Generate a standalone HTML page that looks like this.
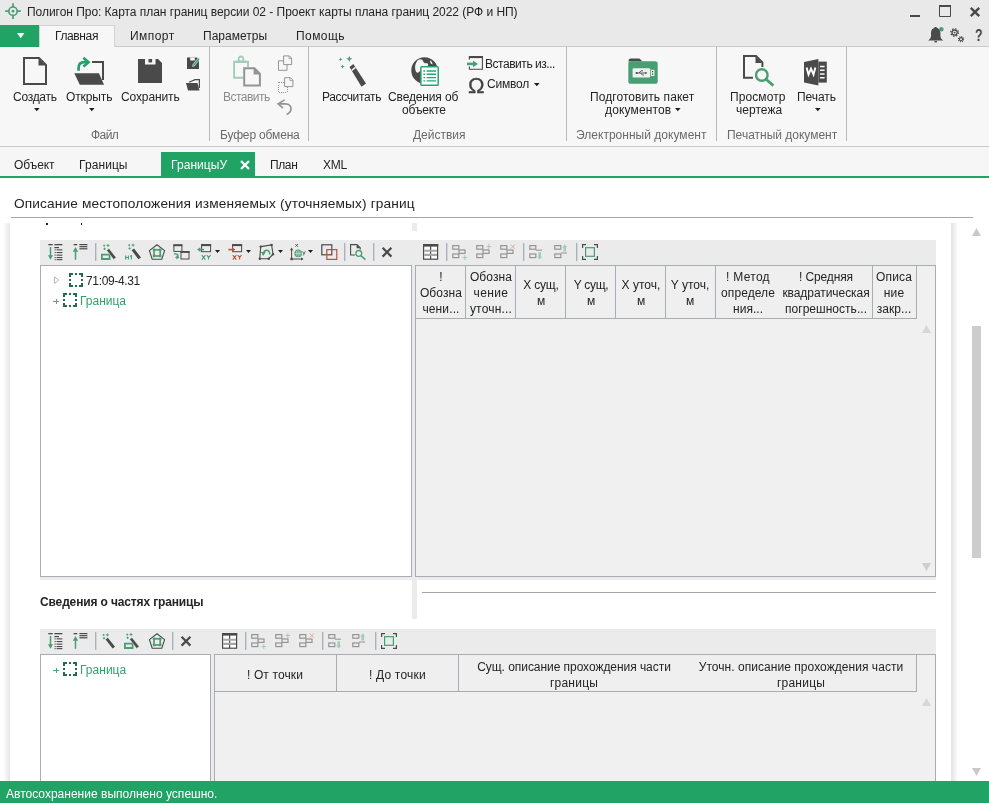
<!DOCTYPE html>
<html lang="ru"><head><meta charset="utf-8"><title>Полигон Про</title>
<style>
html,body{margin:0;padding:0;}
body{width:989px;height:803px;position:relative;overflow:hidden;background:#fff;font-family:"Liberation Sans",sans-serif;}
.a{position:absolute;box-sizing:border-box;}
.t{position:absolute;white-space:nowrap;line-height:1;will-change:transform;}
svg{position:absolute;overflow:visible;}
</style></head>
<body>
<div class="a" style="left:0px;top:0px;width:989px;height:46px;background:#e9e9e9;"></div>
<div class="a" style="left:0px;top:46px;width:989px;height:101px;background:#f7f7f7;border-top:1px solid #cbcbcb;border-bottom:1px solid #c9c9c9;"></div>
<div class="a" style="left:0px;top:25px;width:39px;height:22px;background:#21a366;"></div>
<div class="a" style="left:39px;top:25px;width:76px;height:22px;background:#f7f7f7;border:1px solid #d2d2d2;border-bottom:none;"></div>
<div class="a" style="left:209px;top:47px;width:1px;height:94px;background:#b9b9b9;"></div>
<div class="a" style="left:308px;top:47px;width:1px;height:94px;background:#b9b9b9;"></div>
<div class="a" style="left:566px;top:47px;width:1px;height:94px;background:#b9b9b9;"></div>
<div class="a" style="left:716px;top:47px;width:1px;height:94px;background:#b9b9b9;"></div>
<div class="a" style="left:846px;top:47px;width:1px;height:94px;background:#b9b9b9;"></div>
<div class="a" style="left:0px;top:147px;width:989px;height:29px;background:#f6f6f6;"></div>
<div class="a" style="left:0px;top:176px;width:989px;height:2px;background:#21a366;"></div>
<div class="a" style="left:161px;top:152px;width:94px;height:26px;background:#21a366;"></div>
<div class="a" style="left:11px;top:217px;width:962px;height:1px;background:#a3a5ad;"></div>
<div class="a" style="left:3px;top:223px;width:7px;height:559px;background:linear-gradient(to right,rgba(255,255,255,0),#e6e6e6);"></div>
<div class="a" style="left:951px;top:223px;width:7px;height:559px;background:linear-gradient(to right,#e2e2e2,rgba(255,255,255,0));"></div>
<div class="a" style="left:46px;top:223px;width:1.6px;height:1.6px;background:#222;"></div>
<div class="a" style="left:80.5px;top:223px;width:1.6px;height:1.6px;background:#222;"></div>
<div class="a" style="left:412px;top:223px;width:5px;height:8px;background:#ebebeb;"></div>
<div class="a" style="left:412px;top:240px;width:5px;height:379px;background:#ebebeb;"></div>
<div class="a" style="left:40px;top:240px;width:896px;height:25px;background:#ebebeb;"></div>
<div class="a" style="left:40px;top:577px;width:896px;height:3px;background:#ebebeb;"></div>
<div class="a" style="left:40px;top:265px;width:372px;height:312px;background:#fff;border:1px solid #a9abb5;"></div>
<div class="a" style="left:415px;top:265px;width:521px;height:312px;background:#f0f0f0;border:1px solid #a9abb5;"></div>
<div class="a" style="left:415px;top:265px;width:51px;height:54px;border:1px solid #a9abb5;background:#efefef;"></div>
<div class="a" style="left:465px;top:265px;width:51px;height:54px;border:1px solid #a9abb5;background:#efefef;"></div>
<div class="a" style="left:515px;top:265px;width:51px;height:54px;border:1px solid #a9abb5;background:#efefef;"></div>
<div class="a" style="left:565px;top:265px;width:51px;height:54px;border:1px solid #a9abb5;background:#efefef;"></div>
<div class="a" style="left:615px;top:265px;width:51px;height:54px;border:1px solid #a9abb5;background:#efefef;"></div>
<div class="a" style="left:665px;top:265px;width:51px;height:54px;border:1px solid #a9abb5;background:#efefef;"></div>
<div class="a" style="left:715px;top:265px;width:158px;height:54px;border:1px solid #a9abb5;background:#efefef;"></div>
<div class="a" style="left:872px;top:265px;width:45px;height:54px;border:1px solid #a9abb5;background:#efefef;"></div>
<div class="a" style="left:422px;top:592px;width:514px;height:1px;background:#a2a2a2;"></div>
<div class="a" style="left:40px;top:629px;width:896px;height:25px;background:#ebebeb;"></div>
<div class="a" style="left:211px;top:654px;width:3px;height:128px;background:#ebebeb;"></div>
<div class="a" style="left:40px;top:654px;width:171px;height:140px;background:#fff;border:1px solid #a9abb5;"></div>
<div class="a" style="left:214px;top:654px;width:722px;height:140px;background:#f0f0f0;border:1px solid #a9abb5;"></div>
<div class="a" style="left:214px;top:654px;width:123px;height:38px;border:1px solid #a9abb5;background:#efefef;"></div>
<div class="a" style="left:336px;top:654px;width:123px;height:38px;border:1px solid #a9abb5;background:#efefef;"></div>
<div class="a" style="left:458px;top:654px;width:459px;height:38px;border:1px solid #a9abb5;background:#efefef;"></div>
<div class="a" style="left:972px;top:326px;width:9px;height:232px;background:#cdcdcd;"></div>
<div class="a" style="left:0px;top:781px;width:989px;height:22px;background:#21a366;"></div>
<svg style="left:5px;top:3px" width="16" height="16" viewBox="0 0 16 16"><circle cx="8" cy="8.2" r="4.2" fill="none" stroke="#4a9e74" stroke-width="1.7"/><circle cx="8" cy="8.2" r="1.4" fill="#4a9e74"/><path d="M8,0.3 V4 M8,12.4 V16 M0.2,8.2 H3.8 M12.2,8.2 H15.8" stroke="#4a9e74" stroke-width="1.7" fill="none"/></svg>
<svg style="left:910px;top:15px" width="10" height="2" viewBox="0 0 10 2"><rect width="10" height="2" fill="#4a4a4a"/></svg><svg style="left:939px;top:5px" width="12" height="12" viewBox="0 0 12 12"><path d="M0.5,1 H11.5 V11.5 H0.5 Z" fill="none" stroke="#4a4a4a" stroke-width="1"/><rect x="0" y="0" width="12" height="2" fill="#4a4a4a"/></svg><svg style="left:970px;top:7px" width="10" height="10" viewBox="0 0 10 10"><path d="M0.8,0.8 L9.2,9.2 M9.2,0.8 L0.8,9.2" stroke="#4a4a4a" stroke-width="2.4" fill="none"/></svg><svg style="left:928.4px;top:27px" width="16" height="16" viewBox="0 0 16 16"><path d="M7.7,0.8 C4.6,0.8 3,3.2 3,6 V9 C3,11 1.8,12 0.2,13.4 H15.2 C13.6,12 12.4,11 12.4,9 V6 C12.4,3.2 10.8,0.8 7.7,0.8 Z" fill="#4a4a4a"/><rect x="6.6" y="0" width="2" height="1.6" fill="#4a4a4a"/><rect x="6.4" y="14" width="2.6" height="1.4" fill="#4a4a4a"/><circle cx="13.4" cy="2.2" r="2.2" fill="#4a9e74"/></svg><svg style="left:949px;top:27px" width="16" height="16" viewBox="0 0 16 16"><circle cx="5.6" cy="5.6" r="2.6" fill="none" stroke="#4a4a4a" stroke-width="1.3"/><circle cx="5.6" cy="5.6" r="3.7700000000000005" fill="none" stroke="#4a4a4a" stroke-width="1.3" stroke-dasharray="1.480"/><circle cx="5.6" cy="5.6" r="0.9" fill="#4a4a4a"/><circle cx="12" cy="12.2" r="1.6" fill="none" stroke="#4a4a4a" stroke-width="1.1"/><circle cx="12" cy="12.2" r="2.5900000000000003" fill="none" stroke="#4a4a4a" stroke-width="1.1" stroke-dasharray="1.017"/></svg>
<svg style="left:17px;top:33px" width="7.4" height="5.2" viewBox="0 0 7.4 5.2"><path d="M0,0 H7.4 L3.7,5.2 Z" fill="#fff"/></svg>
<svg style="left:23px;top:57px" width="24" height="28" viewBox="0 0 24 28"><path d="M1,1 H16 L23,8 V27 H1 Z" fill="none" stroke="#4a4a4a" stroke-width="2"/><path d="M15.5,1.5 V8.5 H22.5 Z" fill="#4a4a4a"/></svg><svg style="left:74px;top:57px" width="30" height="28" viewBox="0 0 30 28"><path d="M18,5 H29 V23" fill="none" stroke="#4a4a4a" stroke-width="2"/><path d="M0.3,16.3 H25 L30,27.8 H5.8 Z" fill="#4a4a4a"/><path d="M4.6,13.8 V10.5 C4.6,7 7,5.2 10.5,5.2 H14" fill="none" stroke="#21a366" stroke-width="2.7"/><path d="M9.4,0.8 L14.6,5.2 L9.4,9.6" fill="none" stroke="#21a366" stroke-width="2.6"/></svg><svg style="left:138px;top:59px" width="24" height="24" viewBox="0 0 24 24"><path d="M0,0 H20 L24,4 V24 H0 Z" fill="#4a4a4a"/><rect x="7" y="0" width="10.5" height="5.5" fill="#f7f7f7"/><rect x="10.5" y="0" width="3.6" height="3.4" fill="#4a4a4a"/></svg><svg style="left:187px;top:57px" width="13" height="12" viewBox="0 0 13 12"><path d="M0,0.5 H10 L12,2.5 V12 H0 Z" fill="#4a4a4a"/><rect x="3.2" y="0.5" width="4.6" height="3" fill="#f7f7f7"/><path d="M6,7.5 L11.2,0.8 L12.8,2.2 L7.6,8.8 L5.6,9.4 Z" fill="#4a9e74" stroke="#f7f7f7" stroke-width="0.6"/></svg><svg style="left:186px;top:79px" width="14" height="12" viewBox="0 0 14 12"><path d="M3,3.2 L9,0.6 H13.4 V9" fill="none" stroke="#4a4a4a" stroke-width="1.2"/><path d="M0,4 H11.5 L13.5,11.5 H2 Z" fill="#4a4a4a"/></svg><svg style="left:233px;top:55px" width="28" height="32" viewBox="0 0 28 32"><path d="M4,6.8 H1.1 V22.8 H10" fill="none" stroke="#a3cdb6" stroke-width="1.9"/><path d="M12,6.8 H15 V12" fill="none" stroke="#a3cdb6" stroke-width="1.9"/><path d="M2.6,8 V5.8 H4.7 C4.3,2.4 6,0.6 8,0.6 C10,0.6 11.7,2.4 11.3,5.8 H13.4 V8 Z" fill="#a3cdb6"/><circle cx="8" cy="4" r="1.6" fill="#f7f7f7"/><path d="M11.2,13.2 H21.4 L26.9,18.7 V30.6 H11.2 Z" fill="#f7f7f7" stroke="#949494" stroke-width="2"/><path d="M20.6,12.6 V19.4 H27.6 Z" fill="#949494"/></svg><svg style="left:278px;top:55px" width="15" height="16" viewBox="0 0 15 16"><path d="M0.5,5.8 H9 V15.3 H0.5 Z" fill="none" stroke="#949494" stroke-width="1"/><path d="M5.6,0.9 H11.4 L13.6,3.1 V9.6 H5.6 Z" fill="#f7f7f7" stroke="#949494" stroke-width="1"/><path d="M11,1 V3.6 H13.6" fill="none" stroke="#949494" stroke-width="0.8"/></svg><svg style="left:278px;top:77px" width="16" height="16.5" viewBox="0 0 16 16.5"><path d="M0.5,5.5 H9 V15.5 H0.5 Z" fill="none" stroke="#949494" stroke-width="1" stroke-dasharray="1 1.12" shape-rendering="crispEdges"/><path d="M6.6,0.7 H12.4 L14.9,3.2 V9.6 H6.6 Z" fill="#f7f7f7" stroke="#949494" stroke-width="1"/><path d="M12,0.8 V3.6 H14.8" fill="none" stroke="#949494" stroke-width="0.8"/></svg><svg style="left:277px;top:99px" width="16" height="16.5" viewBox="0 0 16 16.5"><path d="M1.4,4.9 H8.6 C12,4.9 14,7 14,9.6 C14,12.4 12.2,14.4 9.6,15.4" fill="none" stroke="#949494" stroke-width="1.7"/><path d="M7.6,0.9 L1.2,4.9 L6,9.2" fill="none" stroke="#949494" stroke-width="1.7"/></svg><svg style="left:337.8px;top:55.7px" width="28" height="31" viewBox="0 0 28 31"><path d="M2.6,1.5 L3.132,2.868 L4.5,3.4 L3.132,3.932 L2.6,5.3 L2.068,3.932 L0.7000000000000002,3.4 L2.068,2.868 Z" fill="#4a9e74"/><path d="M11.3,-0.30000000000000027 L12.168000000000001,1.9319999999999997 L14.4,2.8 L12.168000000000001,3.668 L11.3,5.9 L10.432,3.668 L8.200000000000001,2.8 L10.432,1.9319999999999997 Z" fill="#4a9e74"/><path d="M4.6,8.399999999999999 L5.215999999999999,9.984 L6.8,10.6 L5.215999999999999,11.216 L4.6,12.8 L3.9839999999999995,11.216 L2.3999999999999995,10.6 L3.9839999999999995,9.984 Z" fill="#4a9e74"/><path d="M11.5,11 L15.3,8 L28,27.5 L23.5,30.8 Z" fill="#4a4a4a"/><path d="M13.3,13.8 L17.1,10.8 L17.9,12 L14.1,15 Z" fill="#f7f7f7"/></svg><svg style="left:411px;top:57px" width="28" height="29" viewBox="0 0 28 29"><circle cx="13.5" cy="13.4" r="13.2" fill="#4a4a4a"/><path d="M7,3 C9.5,1.6 11.4,2.2 12.2,4.4 C12.8,6 14.4,6.4 16.4,6.2 C18,7.4 17,9.4 15,10.4 L10,12.4 C8.4,14.6 7.4,16.6 5.4,15.2 C3.4,12.4 3.6,6.4 7,3 Z" fill="#f7f7f7"/><path d="M19.4,3.2 C20.6,4.4 21.4,5.6 21.6,7.4 L19.8,6.6 C19.2,5.4 19,4.4 19.4,3.2 Z" fill="#f7f7f7"/><rect x="9.9" y="9.8" width="17.3" height="18.4" rx="0.8" fill="#fff" stroke="#2aa374" stroke-width="1.5"/><path d="M12.4,14 h1.7 M15.6,14 h9.4 M12.4,17.3 h1.7 M15.6,17.3 h9.4 M12.4,20.6 h1.7 M15.6,20.6 h9.4 M12.4,23.9 h1.7 M15.6,23.9 h9.4" stroke="#2aa374" stroke-width="1.4"/></svg><svg style="left:467px;top:56px" width="16" height="14" viewBox="0 0 16 14"><path d="M2.4,1 V3.6 M2.4,10.6 V13.3 H15.4 V1" fill="none" stroke="#4a4a4a" stroke-width="1.1"/><rect x="1.9" y="0" width="14.1" height="2.1" fill="#4a4a4a"/><path d="M0,7.9 H6.5" stroke="#4a9e74" stroke-width="2.6"/><path d="M6,4.5 L11,7.9 L6,11.3 Z" fill="#4a9e74"/></svg><svg style="left:628px;top:58px" width="30" height="26" viewBox="0 0 30 26"><path d="M0.5,3 C0.5,1.6 1.4,0.6 2.8,0.6 H11.5 L14.5,3.6 H0.5 Z" fill="#4a4a4a"/><rect x="0.3" y="3.2" width="29.4" height="22.6" rx="2.6" fill="#4a9e74"/><rect x="4.6" y="10.2" width="17.6" height="9.4" rx="1.2" fill="#eef4f0"/><rect x="23" y="11.8" width="3.4" height="6.2" fill="#eef4f0"/><rect x="24" y="13" width="1.2" height="1.3" fill="#4a4a4a"/><rect x="24" y="15.5" width="1.2" height="1.3" fill="#4a4a4a"/><path d="M8,15 H18 M11,15 L13,12.8 H15 M12.6,15 L14.4,17 H16" stroke="#4a4a4a" stroke-width="0.9" fill="none"/><circle cx="8.6" cy="15" r="1.1" fill="#4a4a4a"/><path d="M17.4,13.8 L19.4,15 L17.4,16.2 Z" fill="#4a4a4a"/></svg><svg style="left:743px;top:55px" width="32" height="31.5" viewBox="0 0 32 31.5"><path d="M10,22.8 H1 V1 H13 L19.4,7.4 V12" fill="none" stroke="#4a4a4a" stroke-width="2"/><path d="M12.5,1.5 V8 H19 Z" fill="#4a4a4a"/><circle cx="18.8" cy="20" r="5.8" fill="#f7f7f7" stroke="#4a9e74" stroke-width="2.4"/><path d="M23,24.2 L30.4,30.6" stroke="#4a9e74" stroke-width="2.8" fill="none"/></svg><svg style="left:804px;top:58.6px" width="23" height="26.5" viewBox="0 0 23 26.5"><path d="M0,3 L14.4,0 V26.5 L0,23.5 Z" fill="#4a4a4a"/><rect x="14.4" y="2.6" width="8.4" height="21" fill="#4a4a4a"/><path d="M16,7.4 H20.6 M16,11.2 H20.6 M16,15 H20.6 M16,18.8 H20.6" stroke="#f7f7f7" stroke-width="1.5"/><path d="M2.6,8.4 L4.5,15.6 L7,9.6 L9.5,15.6 L11.4,8.4" fill="none" stroke="#fff" stroke-width="1.9" stroke-linejoin="miter"/></svg><svg style="left:33.800000000000004px;top:107.80000000000001px" width="5.6" height="3.2" viewBox="0 0 5.6 3.2"><path d="M0,0 H5.6 L2.8,3.2 Z" fill="#1e1e1e"/></svg><svg style="left:88.7px;top:107.80000000000001px" width="5.6" height="3.2" viewBox="0 0 5.6 3.2"><path d="M0,0 H5.6 L2.8,3.2 Z" fill="#1e1e1e"/></svg><svg style="left:533.6px;top:82.9px" width="5.6" height="3.2" viewBox="0 0 5.6 3.2"><path d="M0,0 H5.6 L2.8,3.2 Z" fill="#1e1e1e"/></svg><svg style="left:674.5px;top:108.2px" width="5.6" height="3.2" viewBox="0 0 5.6 3.2"><path d="M0,0 H5.6 L2.8,3.2 Z" fill="#1e1e1e"/></svg><svg style="left:814.5px;top:108.2px" width="5.6" height="3.2" viewBox="0 0 5.6 3.2"><path d="M0,0 H5.6 L2.8,3.2 Z" fill="#1e1e1e"/></svg>
<svg style="left:240px;top:159.6px" width="10" height="10" viewBox="0 0 10 10"><path d="M1,1 L9,9 M9,1 L1,9" stroke="#fff" stroke-width="2.3" fill="none"/></svg>
<svg style="left:48px;top:244px" width="16" height="16" viewBox="0 0 16 16"><rect x="0.3" y="0" width="4.4" height="1.3" fill="#4a4a4a"/><rect x="6.4" y="0" width="8" height="1.3" fill="#4a4a4a"/><rect x="6.4" y="3" width="4.6" height="1.2" fill="#4a4a4a"/><rect x="6.6" y="5.3" width="1.1" height="1.1" fill="#4a4a4a"/><rect x="8.6" y="5.3" width="5.8" height="1.1" fill="#4a4a4a"/><rect x="6.6" y="8" width="1.1" height="1.1" fill="#4a4a4a"/><rect x="8.6" y="8" width="5.8" height="1.1" fill="#4a4a4a"/><rect x="6.6" y="10.6" width="1.1" height="1.1" fill="#4a4a4a"/><rect x="8.6" y="10.6" width="5.8" height="1.1" fill="#4a4a4a"/><rect x="6.6" y="13" width="1.1" height="1.1" fill="#4a4a4a"/><rect x="8.6" y="13" width="5.8" height="1.1" fill="#4a4a4a"/><rect x="6.6" y="15.1" width="1.1" height="1.1" fill="#4a4a4a"/><rect x="8.6" y="15.1" width="5.8" height="1.1" fill="#4a4a4a"/><path d="M2.5,3 V14" stroke="#4a9e74" stroke-width="1.5"/><path d="M0,11.2 H5 L2.5,15.8 Z" fill="#4a9e74"/></svg><svg style="left:72px;top:244px" width="16" height="16" viewBox="0 0 16 16"><rect x="1.6" y="0" width="3.6" height="1.3" fill="#4a4a4a"/><rect x="7.4" y="0" width="8" height="1.2" fill="#4a4a4a"/><rect x="7.4" y="2.1" width="8" height="1.2" fill="#4a4a4a"/><rect x="7.4" y="4.2" width="8" height="1.2" fill="#4a4a4a"/><path d="M3.5,5 V15.8" stroke="#4a9e74" stroke-width="1.5"/><path d="M0.8,7.8 H6.2 L3.5,3 Z" fill="#4a9e74"/></svg><svg style="left:94.7px;top:243px" width="1.4" height="18" viewBox="0 0 1.4 18"><rect width="1.4" height="18" fill="#a9b1bd"/></svg><svg style="left:100.6px;top:244px" width="16" height="16" viewBox="0 0 16 16"><path d="M2.2,1.6 H4.2 M3.2,0.6000000000000001 V2.6" stroke="#4a9e74" stroke-width="0.9"/><path d="M5.5,1.5 H8.5 M7.0,0.0 V3.0" stroke="#4a9e74" stroke-width="0.9"/><path d="M2.4000000000000004,4.8 H4.8 M3.6,3.5999999999999996 V6.0" stroke="#4a9e74" stroke-width="0.9"/><path d="M0.9,10.6 H8.6 V15 H0.9 Z" fill="none" stroke="#4a9e74" stroke-width="1.8"/><path d="M5.6,6.2 L8,4.6 L15.2,13.6 L12.6,15.4 Z" fill="#4a4a4a" stroke="#ebebeb" stroke-width="0.5"/></svg><svg style="left:124.6px;top:244px" width="16" height="16" viewBox="0 0 16 16"><path d="M3.2,1.2000000000000002 H5.2 M4.2,0.20000000000000018 V2.2" stroke="#4a9e74" stroke-width="0.9"/><path d="M6.5,1.1 H9.5 M8.0,-0.3999999999999999 V2.6" stroke="#4a9e74" stroke-width="0.9"/><path d="M3.3999999999999995,4.3999999999999995 H5.8 M4.6,3.1999999999999993 V5.6" stroke="#4a9e74" stroke-width="0.9"/><path d="M0.6,11.4 V15.6 M3.4,11.4 V15.6 M0.6,13.5 H3.4 M5,12.4 L6.4,11.5 V15.6" stroke="#4a9e74" stroke-width="1.1" fill="none"/><path d="M6.6,6.2 L9,4.6 L16,13.4 L13.4,15.2 Z" fill="#4a4a4a"/></svg><svg style="left:149px;top:244px" width="16" height="16" viewBox="0 0 16 16"><path d="M8,0.8 L15.6,6.6 L12.8,15.2 H3.2 L0.4,6.6 Z" fill="none" stroke="#4a4a4a" stroke-width="1.1"/><rect x="5" y="5.8" width="6.2" height="6.2" fill="none" stroke="#4a9e74" stroke-width="1.7"/><rect x="3.8" y="4.6" width="2.4" height="2.4" fill="#4a9e74"/><rect x="10.0" y="4.6" width="2.4" height="2.4" fill="#4a9e74"/><rect x="3.8" y="10.8" width="2.4" height="2.4" fill="#4a9e74"/><rect x="10.0" y="10.8" width="2.4" height="2.4" fill="#4a9e74"/></svg><svg style="left:173px;top:244px" width="17" height="16" viewBox="0 0 17 16"><rect x="0.9" y="1" width="8" height="6.4" fill="none" stroke="#4a4a4a" stroke-width="1"/><rect x="0.4" y="0.4" width="9" height="1.8" fill="#4a4a4a"/><rect x="8" y="7.6" width="8" height="7.4" fill="#ebebeb" stroke="#4a4a4a" stroke-width="1"/><rect x="7.5" y="7" width="9" height="1.9" fill="#4a4a4a"/><path d="M1,10 C4.6,9.4 5.6,11 4.8,12.4 C4,13.6 2.6,13.4 2.4,13.4" fill="none" stroke="#4a9e74" stroke-width="1.3"/><path d="M3.8,11 L6.4,13.6 L3.4,15.4 Z" fill="#4a9e74"/></svg><svg style="left:197px;top:244px" width="15" height="16" viewBox="0 0 15 16"><rect x="4.6" y="0.7" width="9" height="7" fill="none" stroke="#4a4a4a" stroke-width="1"/><rect x="4.1" y="0.2" width="10" height="1.9" fill="#4a4a4a"/><path d="M2.5,5.6 H7" stroke="#4a9e74" stroke-width="1.6"/><path d="M3.4,3.2 L0,5.6 L3.4,8 Z" fill="#4a9e74"/><path d="M4.8,11.2 L8.4,15.6 M8.4,11.2 L4.8,15.6 M9.8,11.2 L11.6,13.4 L13.6,11.2 M11.6,13.4 V15.6" stroke="#4a9e74" stroke-width="1.1" fill="none"/></svg><svg style="left:215.1px;top:249.9px" width="5" height="3" viewBox="0 0 5 3"><path d="M0,0 H5 L2.5,3 Z" fill="#1e1e1e"/></svg><svg style="left:227.6px;top:244px" width="15" height="16" viewBox="0 0 15 16"><rect x="4.6" y="0.7" width="9" height="7" fill="none" stroke="#4a4a4a" stroke-width="1"/><rect x="4.1" y="0.2" width="10" height="1.9" fill="#4a4a4a"/><path d="M0.4,5.6 H5" stroke="#b4553a" stroke-width="1.6"/><path d="M4,3.2 L7.4,5.6 L4,8 Z" fill="#b4553a"/><path d="M4.8,11.2 L8.4,15.6 M8.4,11.2 L4.8,15.6 M9.8,11.2 L11.6,13.4 L13.6,11.2 M11.6,13.4 V15.6" stroke="#b4553a" stroke-width="1.1" fill="none"/></svg><svg style="left:246.1px;top:249.9px" width="5" height="3" viewBox="0 0 5 3"><path d="M0,0 H5 L2.5,3 Z" fill="#1e1e1e"/></svg><svg style="left:259.4px;top:244px" width="16" height="16" viewBox="0 0 16 16"><path d="M1.7,2.6 L12.6,0.9 L14,10.2 L9.8,14.7 L0.8,14.7 Z" fill="none" stroke="#4a4a4a" stroke-width="1.1"/><circle cx="1.7" cy="2.6" r="1.2" fill="#4a4a4a"/><circle cx="12.6" cy="0.9" r="1.2" fill="#4a4a4a"/><circle cx="14" cy="10.2" r="1.2" fill="#4a4a4a"/><circle cx="9.8" cy="14.7" r="1.2" fill="#4a4a4a"/><circle cx="0.8" cy="14.7" r="1.2" fill="#4a4a4a"/><path d="M4.6,9.8 C5,5.2 10.4,4.8 10.8,10.2" fill="none" stroke="#4a9e74" stroke-width="1.6"/><path d="M2,8 L6.8,7.8 L4.2,12 Z" fill="#4a9e74"/></svg><svg style="left:277.5px;top:249.9px" width="5" height="3" viewBox="0 0 5 3"><path d="M0,0 H5 L2.5,3 Z" fill="#1e1e1e"/></svg><svg style="left:289.8px;top:244px" width="16" height="17" viewBox="0 0 16 17"><path d="M1.6,15.2 V4.6 M1.6,15 H12.6" stroke="#4a4a4a" stroke-width="1" fill="none"/><path d="M0,6.2 L1.6,3.6 L3.2,6.2 Z M11,13.4 L13.6,15 L11,16.6 Z" fill="#4a4a4a"/><rect x="0.4" y="13.8" width="2.4" height="2.4" fill="#4a4a4a"/><circle cx="8.2" cy="9.4" r="3.8" fill="#4a9e74"/><path d="M4.6,9.4 H11.8 M8.2,5.8 V13 M6,6.6 C7,8.4 7,10.4 6,12.2 M10.4,6.6 C9.4,8.4 9.4,10.4 10.4,12.2" stroke="#e4efe9" stroke-width="0.6" fill="none"/><path d="M5.4,0 L8,2.8 M8,0 L5.4,2.8" stroke="#4a4a4a" stroke-width="0.8"/><path d="M12.6,7.4 L14,10 M15.2,7.4 L13.4,11.4" stroke="#4a4a4a" stroke-width="0.8" fill="none"/></svg><svg style="left:308.3px;top:249.9px" width="5" height="3" viewBox="0 0 5 3"><path d="M0,0 H5 L2.5,3 Z" fill="#1e1e1e"/></svg><svg style="left:321px;top:244px" width="16" height="16" viewBox="0 0 16 16"><rect x="0.8" y="0.8" width="10" height="10" fill="none" stroke="#4a4a4a" stroke-width="1.2"/><rect x="5.8" y="5.6" width="10" height="9.8" fill="none" stroke="#b4553a" stroke-width="1.2"/></svg><svg style="left:343.8px;top:243px" width="1.4" height="18" viewBox="0 0 1.4 18"><rect width="1.4" height="18" fill="#a9b1bd"/></svg><svg style="left:349.6px;top:244px" width="16" height="16" viewBox="0 0 16 16"><path d="M5,11 H0.6 V0.6 H7 L10.2,3.8 V5.4" fill="none" stroke="#4a4a4a" stroke-width="1.1"/><path d="M6.6,0.6 V4.2 H10.2 Z" fill="#4a4a4a"/><circle cx="8.8" cy="9.4" r="2.9" fill="none" stroke="#4a9e74" stroke-width="1.3"/><path d="M10.9,11.6 L15.4,15.6" stroke="#4a9e74" stroke-width="1.5"/></svg><svg style="left:372.7px;top:243px" width="1.4" height="18" viewBox="0 0 1.4 18"><rect width="1.4" height="18" fill="#a9b1bd"/></svg><svg style="left:379px;top:244px" width="16" height="16" viewBox="0 0 16 16"><path d="M3.6,3.8 L12.4,12.6 M12.4,3.8 L3.6,12.6" stroke="#4a4a4a" stroke-width="2.2" fill="none"/></svg><svg style="left:423px;top:244px" width="16" height="16" viewBox="0 0 16 16"><rect x="0.6" y="0.6" width="14" height="14.6" fill="#fff" stroke="#4a4a4a" stroke-width="1.2"/><rect x="0" y="0" width="15.2" height="2.6" fill="#4a4a4a"/><path d="M7.6,2 V15" stroke="#4a4a4a" stroke-width="1.2"/><path d="M1.2,6.7 H14 M1.2,10.9 H14" stroke="#a6a6a6" stroke-width="2.1"/></svg><svg style="left:445.7px;top:243px" width="1.4" height="18" viewBox="0 0 1.4 18"><rect width="1.4" height="18" fill="#a9b1bd"/></svg><svg style="left:451.6px;top:244px" width="16" height="16" viewBox="0 0 16 16"><rect x="0.8" y="1.6" width="6" height="3.6" fill="none" stroke="#949494" stroke-width="1.2"/><rect x="0.8" y="10" width="6" height="3.6" fill="none" stroke="#949494" stroke-width="1.2"/><rect x="7" y="6" width="6" height="3.4" fill="none" stroke="#949494" stroke-width="1.2"/><path d="M10.4,13.6 H15.2 M12.8,11.2 V16" stroke="#a3cdb6" stroke-width="1"/></svg><svg style="left:475.6px;top:244px" width="16" height="16" viewBox="0 0 16 16"><rect x="0.8" y="1.6" width="6" height="3.6" fill="none" stroke="#949494" stroke-width="1.2"/><rect x="0.8" y="10" width="6" height="3.6" fill="none" stroke="#949494" stroke-width="1.2"/><rect x="7" y="6" width="6" height="3.4" fill="none" stroke="#949494" stroke-width="1.2"/><path d="M10.4,2.6 H15.2 M12.8,0.2 V5" stroke="#a3cdb6" stroke-width="1"/></svg><svg style="left:499.6px;top:244px" width="16" height="16" viewBox="0 0 16 16"><rect x="0.8" y="1.6" width="6" height="3.6" fill="none" stroke="#949494" stroke-width="1.2"/><rect x="0.8" y="10" width="6" height="3.6" fill="none" stroke="#949494" stroke-width="1.2"/><rect x="7" y="6" width="6" height="3.4" fill="none" stroke="#949494" stroke-width="1.2"/><path d="M10.8,0.6 L14.8,4.6 M14.8,0.6 L10.8,4.6" stroke="#dca898" stroke-width="1"/></svg><svg style="left:522.8px;top:243px" width="1.4" height="18" viewBox="0 0 1.4 18"><rect width="1.4" height="18" fill="#a9b1bd"/></svg><svg style="left:528.6px;top:244px" width="16" height="16" viewBox="0 0 16 16"><rect x="0.8" y="1.6" width="6" height="3.6" fill="none" stroke="#949494" stroke-width="1.2"/><rect x="0.8" y="10" width="6" height="3.6" fill="none" stroke="#949494" stroke-width="1.2"/><path d="M6.8,6.2 H13" stroke="#949494" stroke-width="1"/><path d="M9.4,8.2 H12 V12.4 H13.2 L10.7,15.6 L8.2,12.4 H9.4 Z" fill="#a3cdb6"/></svg><svg style="left:553.6px;top:244px" width="16" height="16" viewBox="0 0 16 16"><rect x="0.8" y="1.6" width="6" height="3.6" fill="none" stroke="#949494" stroke-width="1.2"/><rect x="0.8" y="10" width="6" height="3.6" fill="none" stroke="#949494" stroke-width="1.2"/><path d="M6.8,9 H13" stroke="#949494" stroke-width="1"/><path d="M9.4,7.4 H12 V3.4 H13.2 L10.7,0.2 L8.2,3.4 H9.4 Z" fill="#a3cdb6"/></svg><svg style="left:575.7px;top:243px" width="1.4" height="18" viewBox="0 0 1.4 18"><rect width="1.4" height="18" fill="#a9b1bd"/></svg><svg style="left:582px;top:244px" width="16" height="16" viewBox="0 0 16 16"><path d="M0.6,4 V0.6 H4 M12,0.6 H15.4 V4 M15.4,12 V15.4 H12 M4,15.4 H0.6 V12" fill="none" stroke="#4a4a4a" stroke-width="1.2"/><rect x="3.6" y="3.7" width="8.8" height="8.6" fill="none" stroke="#4a9e74" stroke-width="1.2"/></svg>
<svg style="left:48px;top:633px" width="16" height="16" viewBox="0 0 16 16"><rect x="0.3" y="0" width="4.4" height="1.3" fill="#4a4a4a"/><rect x="6.4" y="0" width="8" height="1.3" fill="#4a4a4a"/><rect x="6.4" y="3" width="4.6" height="1.2" fill="#4a4a4a"/><rect x="6.6" y="5.3" width="1.1" height="1.1" fill="#4a4a4a"/><rect x="8.6" y="5.3" width="5.8" height="1.1" fill="#4a4a4a"/><rect x="6.6" y="8" width="1.1" height="1.1" fill="#4a4a4a"/><rect x="8.6" y="8" width="5.8" height="1.1" fill="#4a4a4a"/><rect x="6.6" y="10.6" width="1.1" height="1.1" fill="#4a4a4a"/><rect x="8.6" y="10.6" width="5.8" height="1.1" fill="#4a4a4a"/><rect x="6.6" y="13" width="1.1" height="1.1" fill="#4a4a4a"/><rect x="8.6" y="13" width="5.8" height="1.1" fill="#4a4a4a"/><rect x="6.6" y="15.1" width="1.1" height="1.1" fill="#4a4a4a"/><rect x="8.6" y="15.1" width="5.8" height="1.1" fill="#4a4a4a"/><path d="M2.5,3 V14" stroke="#4a9e74" stroke-width="1.5"/><path d="M0,11.2 H5 L2.5,15.8 Z" fill="#4a9e74"/></svg><svg style="left:72px;top:633px" width="16" height="16" viewBox="0 0 16 16"><rect x="1.6" y="0" width="3.6" height="1.3" fill="#4a4a4a"/><rect x="7.4" y="0" width="8" height="1.2" fill="#4a4a4a"/><rect x="7.4" y="2.1" width="8" height="1.2" fill="#4a4a4a"/><rect x="7.4" y="4.2" width="8" height="1.2" fill="#4a4a4a"/><path d="M3.5,5 V15.8" stroke="#4a9e74" stroke-width="1.5"/><path d="M0.8,7.8 H6.2 L3.5,3 Z" fill="#4a9e74"/></svg><svg style="left:94.7px;top:632px" width="1.4" height="18" viewBox="0 0 1.4 18"><rect width="1.4" height="18" fill="#a9b1bd"/></svg><svg style="left:101.4px;top:633px" width="16" height="16" viewBox="0 0 16 16"><path d="M1.6,2.0 H3.6 M2.6,1.0 V3.0" stroke="#4a9e74" stroke-width="0.9"/><path d="M4.9,1.9 H7.9 M6.4,0.3999999999999999 V3.4" stroke="#4a9e74" stroke-width="0.9"/><path d="M1.8,5.2 H4.2 M3,4.0 V6.4" stroke="#4a9e74" stroke-width="0.9"/><path d="M4.6,6.4 L6.8,4.8 L14,13.8 L11.6,15.4 Z" fill="#4a4a4a"/></svg><svg style="left:124.4px;top:633px" width="16" height="16" viewBox="0 0 16 16"><path d="M2.2,1.6 H4.2 M3.2,0.6000000000000001 V2.6" stroke="#4a9e74" stroke-width="0.9"/><path d="M5.5,1.5 H8.5 M7.0,0.0 V3.0" stroke="#4a9e74" stroke-width="0.9"/><path d="M2.4000000000000004,4.8 H4.8 M3.6,3.5999999999999996 V6.0" stroke="#4a9e74" stroke-width="0.9"/><path d="M0.9,10.6 H8.6 V15 H0.9 Z" fill="none" stroke="#4a9e74" stroke-width="1.8"/><path d="M5.6,6.2 L8,4.6 L15.2,13.6 L12.6,15.4 Z" fill="#4a4a4a" stroke="#ebebeb" stroke-width="0.5"/></svg><svg style="left:149px;top:633px" width="16" height="16" viewBox="0 0 16 16"><path d="M8,0.8 L15.6,6.6 L12.8,15.2 H3.2 L0.4,6.6 Z" fill="none" stroke="#4a4a4a" stroke-width="1.1"/><rect x="5" y="5.8" width="6.2" height="6.2" fill="none" stroke="#4a9e74" stroke-width="1.7"/><rect x="3.8" y="4.6" width="2.4" height="2.4" fill="#4a9e74"/><rect x="10.0" y="4.6" width="2.4" height="2.4" fill="#4a9e74"/><rect x="3.8" y="10.8" width="2.4" height="2.4" fill="#4a9e74"/><rect x="10.0" y="10.8" width="2.4" height="2.4" fill="#4a9e74"/></svg><svg style="left:172px;top:632px" width="1.4" height="18" viewBox="0 0 1.4 18"><rect width="1.4" height="18" fill="#a9b1bd"/></svg><svg style="left:177.8px;top:633px" width="16" height="16" viewBox="0 0 16 16"><path d="M3.6,3.8 L12.4,12.6 M12.4,3.8 L3.6,12.6" stroke="#4a4a4a" stroke-width="2.2" fill="none"/></svg><svg style="left:222px;top:633px" width="16" height="16" viewBox="0 0 16 16"><rect x="0.6" y="0.6" width="14" height="14.6" fill="#fff" stroke="#4a4a4a" stroke-width="1.2"/><rect x="0" y="0" width="15.2" height="2.6" fill="#4a4a4a"/><path d="M7.6,2 V15" stroke="#4a4a4a" stroke-width="1.2"/><path d="M1.2,6.7 H14 M1.2,10.9 H14" stroke="#a6a6a6" stroke-width="2.1"/></svg><svg style="left:244.8px;top:632px" width="1.4" height="18" viewBox="0 0 1.4 18"><rect width="1.4" height="18" fill="#a9b1bd"/></svg><svg style="left:250.8px;top:633px" width="16" height="16" viewBox="0 0 16 16"><rect x="0.8" y="1.6" width="6" height="3.6" fill="none" stroke="#949494" stroke-width="1.2"/><rect x="0.8" y="10" width="6" height="3.6" fill="none" stroke="#949494" stroke-width="1.2"/><rect x="7" y="6" width="6" height="3.4" fill="none" stroke="#949494" stroke-width="1.2"/><path d="M10.4,13.6 H15.2 M12.8,11.2 V16" stroke="#a3cdb6" stroke-width="1"/></svg><svg style="left:274.6px;top:633px" width="16" height="16" viewBox="0 0 16 16"><rect x="0.8" y="1.6" width="6" height="3.6" fill="none" stroke="#949494" stroke-width="1.2"/><rect x="0.8" y="10" width="6" height="3.6" fill="none" stroke="#949494" stroke-width="1.2"/><rect x="7" y="6" width="6" height="3.4" fill="none" stroke="#949494" stroke-width="1.2"/><path d="M10.4,2.6 H15.2 M12.8,0.2 V5" stroke="#a3cdb6" stroke-width="1"/></svg><svg style="left:298.8px;top:633px" width="16" height="16" viewBox="0 0 16 16"><rect x="0.8" y="1.6" width="6" height="3.6" fill="none" stroke="#949494" stroke-width="1.2"/><rect x="0.8" y="10" width="6" height="3.6" fill="none" stroke="#949494" stroke-width="1.2"/><rect x="7" y="6" width="6" height="3.4" fill="none" stroke="#949494" stroke-width="1.2"/><path d="M10.8,0.6 L14.8,4.6 M14.8,0.6 L10.8,4.6" stroke="#dca898" stroke-width="1"/></svg><svg style="left:322px;top:632px" width="1.4" height="18" viewBox="0 0 1.4 18"><rect width="1.4" height="18" fill="#a9b1bd"/></svg><svg style="left:327.6px;top:633px" width="16" height="16" viewBox="0 0 16 16"><rect x="0.8" y="1.6" width="6" height="3.6" fill="none" stroke="#949494" stroke-width="1.2"/><rect x="0.8" y="10" width="6" height="3.6" fill="none" stroke="#949494" stroke-width="1.2"/><path d="M6.8,6.2 H13" stroke="#949494" stroke-width="1"/><path d="M9.4,8.2 H12 V12.4 H13.2 L10.7,15.6 L8.2,12.4 H9.4 Z" fill="#a3cdb6"/></svg><svg style="left:352.4px;top:633px" width="16" height="16" viewBox="0 0 16 16"><rect x="0.8" y="1.6" width="6" height="3.6" fill="none" stroke="#949494" stroke-width="1.2"/><rect x="0.8" y="10" width="6" height="3.6" fill="none" stroke="#949494" stroke-width="1.2"/><path d="M6.8,9 H13" stroke="#949494" stroke-width="1"/><path d="M9.4,7.4 H12 V3.4 H13.2 L10.7,0.2 L8.2,3.4 H9.4 Z" fill="#a3cdb6"/></svg><svg style="left:374.6px;top:632px" width="1.4" height="18" viewBox="0 0 1.4 18"><rect width="1.4" height="18" fill="#a9b1bd"/></svg><svg style="left:380.8px;top:633px" width="16" height="16" viewBox="0 0 16 16"><path d="M0.6,4 V0.6 H4 M12,0.6 H15.4 V4 M15.4,12 V15.4 H12 M4,15.4 H0.6 V12" fill="none" stroke="#4a4a4a" stroke-width="1.2"/><rect x="3.6" y="3.7" width="8.8" height="8.6" fill="none" stroke="#4a9e74" stroke-width="1.2"/></svg>
<svg style="left:54.2px;top:276.2px" width="5.2" height="8.2" viewBox="0 0 5.2 8.2"><path d="M0.5,0.8 L4.6,4.1 L0.5,7.4 Z" fill="none" stroke="#b5b5b5" stroke-width="1"/></svg><svg style="left:69px;top:273px" width="14" height="14" viewBox="0 0 14 14"><g fill="#1f6e49" shape-rendering="crispEdges"><rect x="0" y="0" width="4" height="2"/><rect x="0" y="0" width="2" height="4"/><rect x="10" y="0" width="4" height="2"/><rect x="12" y="0" width="2" height="4"/><rect x="0" y="12" width="4" height="2"/><rect x="0" y="10" width="2" height="4"/><rect x="10" y="12" width="4" height="2"/><rect x="12" y="10" width="2" height="4"/><rect x="6" y="0" width="2" height="2"/><rect x="6" y="12" width="2" height="2"/><rect x="0" y="6" width="2" height="2"/><rect x="12" y="6" width="2" height="2"/></g></svg><svg style="left:63px;top:293px" width="14" height="14" viewBox="0 0 14 14"><g fill="#1f6e49" shape-rendering="crispEdges"><rect x="0" y="0" width="4" height="2"/><rect x="0" y="0" width="2" height="4"/><rect x="10" y="0" width="4" height="2"/><rect x="12" y="0" width="2" height="4"/><rect x="0" y="12" width="4" height="2"/><rect x="0" y="10" width="2" height="4"/><rect x="10" y="12" width="4" height="2"/><rect x="12" y="10" width="2" height="4"/><rect x="6" y="0" width="2" height="2"/><rect x="6" y="12" width="2" height="2"/><rect x="0" y="6" width="2" height="2"/><rect x="12" y="6" width="2" height="2"/></g></svg><svg style="left:63px;top:662px" width="14" height="14" viewBox="0 0 14 14"><g fill="#1f6e49" shape-rendering="crispEdges"><rect x="0" y="0" width="4" height="2"/><rect x="0" y="0" width="2" height="4"/><rect x="10" y="0" width="4" height="2"/><rect x="12" y="0" width="2" height="4"/><rect x="0" y="12" width="4" height="2"/><rect x="0" y="10" width="2" height="4"/><rect x="10" y="12" width="4" height="2"/><rect x="12" y="10" width="2" height="4"/><rect x="6" y="0" width="2" height="2"/><rect x="6" y="12" width="2" height="2"/><rect x="0" y="6" width="2" height="2"/><rect x="12" y="6" width="2" height="2"/></g></svg><svg style="left:53px;top:298px" width="7" height="7" viewBox="0 0 7 7"><path d="M0,3.5 H6 M3.5,1 V6" stroke="#46ab78" stroke-width="1" fill="none" shape-rendering="crispEdges"/></svg><svg style="left:53px;top:667px" width="7" height="7" viewBox="0 0 7 7"><path d="M0,3.5 H6 M3.5,1 V6" stroke="#46ab78" stroke-width="1" fill="none" shape-rendering="crispEdges"/></svg>
<svg style="left:972px;top:228px" width="9" height="8" viewBox="0 0 9 8"><path d="M0,8 L4.5,0 L9,8 Z" fill="#c9c9c9"/></svg><svg style="left:972px;top:768px" width="9" height="8" viewBox="0 0 9 8"><path d="M0,0 L4.5,8 L9,0 Z" fill="#c9c9c9"/></svg><svg style="left:922px;top:324.5px" width="9" height="8" viewBox="0 0 9 8"><path d="M0,8 L4.5,0 L9,8 Z" fill="#d6d6d6"/></svg><svg style="left:922px;top:563.3px" width="9" height="8" viewBox="0 0 9 8"><path d="M0,0 L4.5,8 L9,0 Z" fill="#cecece"/></svg><svg style="left:922px;top:697.5px" width="9" height="8" viewBox="0 0 9 8"><path d="M0,8 L4.5,0 L9,8 Z" fill="#d6d6d6"/></svg>
<div class="t" style="top:6.24px;font-size:12.0px;color:#242424;letter-spacing:-0.041px;left:27.10px;">Полигон Про: Карта план границ версии 02 - Проект карты плана границ 2022 (РФ и НП)</div>
<div class="t" style="top:30.14px;font-size:12.0px;color:#242424;letter-spacing:-0.381px;left:55.00px;">Главная</div>
<div class="t" style="top:30.14px;font-size:12.0px;color:#242424;letter-spacing:0.449px;left:129.80px;">Импорт</div>
<div class="t" style="top:30.14px;font-size:12.0px;color:#242424;letter-spacing:0.029px;left:202.60px;">Параметры</div>
<div class="t" style="top:30.14px;font-size:12.0px;color:#242424;letter-spacing:0.428px;left:295.70px;">Помощь</div>
<div class="t" style="top:90.94px;font-size:12.0px;color:#242424;letter-spacing:-0.268px;left:13.30px;">Создать</div>
<div class="t" style="top:90.94px;font-size:12.0px;color:#242424;letter-spacing:-0.107px;left:66.40px;">Открыть</div>
<div class="t" style="top:90.94px;font-size:12.0px;color:#242424;letter-spacing:-0.118px;left:120.70px;">Сохранить</div>
<div class="t" style="top:129.04px;font-size:12.0px;color:#6a6a6a;letter-spacing:-0.572px;left:90.90px;">Файл</div>
<div class="t" style="top:90.94px;font-size:12.0px;color:#8c8c8c;letter-spacing:-0.511px;left:223.40px;">Вставить</div>
<div class="t" style="top:129.04px;font-size:12.0px;color:#6a6a6a;letter-spacing:-0.159px;left:219.60px;">Буфер обмена</div>
<div class="t" style="top:90.94px;font-size:12.0px;color:#242424;letter-spacing:-0.358px;left:322.00px;">Рассчитать</div>
<div class="t" style="top:90.94px;font-size:12.0px;color:#242424;letter-spacing:-0.140px;left:387.70px;">Сведения об</div>
<div class="t" style="top:104.04px;font-size:12.0px;color:#242424;letter-spacing:-0.125px;left:401.90px;">объекте</div>
<div class="t" style="top:129.04px;font-size:12.0px;color:#6a6a6a;letter-spacing:-0.025px;left:412.50px;">Действия</div>
<div class="t" style="top:58.04px;font-size:12.0px;color:#242424;letter-spacing:-0.462px;left:485.20px;">Вставить из...</div>
<div class="t" style="top:78.34px;font-size:12.0px;color:#242424;letter-spacing:-0.216px;left:487.20px;">Символ</div>
<div class="t" style="top:90.94px;font-size:12.0px;color:#242424;letter-spacing:0.069px;left:589.70px;">Подготовить пакет</div>
<div class="t" style="top:104.04px;font-size:12.0px;color:#242424;letter-spacing:0.145px;left:604.90px;">документов</div>
<div class="t" style="top:129.04px;font-size:12.0px;color:#6a6a6a;letter-spacing:0.025px;left:576.10px;">Электронный документ</div>
<div class="t" style="top:90.94px;font-size:12.0px;color:#242424;letter-spacing:0.098px;left:729.90px;">Просмотр</div>
<div class="t" style="top:104.04px;font-size:12.0px;color:#242424;letter-spacing:0.044px;left:736.20px;">чертежа</div>
<div class="t" style="top:90.94px;font-size:12.0px;color:#242424;letter-spacing:-0.083px;left:796.90px;">Печать</div>
<div class="t" style="top:129.04px;font-size:12.0px;color:#6a6a6a;letter-spacing:-0.008px;left:726.80px;">Печатный документ</div>
<div class="t" style="top:159.34px;font-size:12.0px;color:#242424;letter-spacing:-0.055px;left:13.80px;">Объект</div>
<div class="t" style="top:159.34px;font-size:12.0px;color:#242424;letter-spacing:0.083px;left:79.00px;">Границы</div>
<div class="t" style="top:159.34px;font-size:12.0px;color:#fff;letter-spacing:0.068px;left:170.80px;">ГраницыУ</div>
<div class="t" style="top:159.34px;font-size:12.0px;color:#242424;letter-spacing:-0.379px;left:269.90px;">План</div>
<div class="t" style="top:159.34px;font-size:12.0px;color:#242424;letter-spacing:-0.244px;left:323.00px;">XML</div>
<div class="t" style="top:197.10px;font-size:13.7px;color:#242424;letter-spacing:0.133px;left:13.80px;">Описание местоположения изменяемых (уточняемых) границ</div>
<div class="t" style="top:275.14px;font-size:12.0px;color:#242424;letter-spacing:-0.343px;left:85.70px;">71:09-4.31</div>
<div class="t" style="top:295.34px;font-size:12.0px;color:#2fa36b;letter-spacing:-0.010px;left:79.80px;">Граница</div>
<div class="t" style="top:270.94px;font-size:12.0px;color:#242424;left:290.60px;width:300px;text-align:center;"><span>!</span></div>
<div class="t" style="top:287.14px;font-size:12.0px;color:#242424;letter-spacing:0.087px;left:290.60px;width:300px;text-align:center;"><span>Обозна</span></div>
<div class="t" style="top:303.34px;font-size:12.0px;color:#242424;letter-spacing:0.122px;left:290.60px;width:300px;text-align:center;"><span>чени...</span></div>
<div class="t" style="top:270.94px;font-size:12.0px;color:#242424;letter-spacing:0.087px;left:340.60px;width:300px;text-align:center;"><span>Обозна</span></div>
<div class="t" style="top:287.14px;font-size:12.0px;color:#242424;letter-spacing:0.391px;left:340.60px;width:300px;text-align:center;"><span>чение</span></div>
<div class="t" style="top:303.34px;font-size:12.0px;color:#242424;letter-spacing:0.192px;left:340.60px;width:300px;text-align:center;"><span>уточн...</span></div>
<div class="t" style="top:279.24px;font-size:12.0px;color:#242424;letter-spacing:-0.209px;left:390.50px;width:300px;text-align:center;"><span>X сущ,</span></div>
<div class="t" style="top:295.34px;font-size:12.0px;color:#242424;left:390.50px;width:300px;text-align:center;"><span>м</span></div>
<div class="t" style="top:279.24px;font-size:12.0px;color:#242424;letter-spacing:-0.266px;left:440.50px;width:300px;text-align:center;"><span>Y сущ,</span></div>
<div class="t" style="top:295.34px;font-size:12.0px;color:#242424;left:440.50px;width:300px;text-align:center;"><span>м</span></div>
<div class="t" style="top:279.24px;font-size:12.0px;color:#242424;letter-spacing:0.016px;left:490.50px;width:300px;text-align:center;"><span>X уточ,</span></div>
<div class="t" style="top:295.34px;font-size:12.0px;color:#242424;left:490.50px;width:300px;text-align:center;"><span>м</span></div>
<div class="t" style="top:279.24px;font-size:12.0px;color:#242424;letter-spacing:0.003px;left:540.30px;width:300px;text-align:center;"><span>Y уточ,</span></div>
<div class="t" style="top:295.34px;font-size:12.0px;color:#242424;left:540.30px;width:300px;text-align:center;"><span>м</span></div>
<div class="t" style="top:270.94px;font-size:12.0px;color:#242424;letter-spacing:0.273px;left:597.60px;width:300px;text-align:center;"><span>! Метод</span></div>
<div class="t" style="top:287.14px;font-size:12.0px;color:#242424;letter-spacing:0.069px;left:597.60px;width:300px;text-align:center;"><span>определе</span></div>
<div class="t" style="top:303.34px;font-size:12.0px;color:#242424;letter-spacing:0.031px;left:597.60px;width:300px;text-align:center;"><span>ния...</span></div>
<div class="t" style="top:270.94px;font-size:12.0px;color:#242424;letter-spacing:-0.131px;left:676.00px;width:300px;text-align:center;"><span>! Средняя</span></div>
<div class="t" style="top:287.14px;font-size:12.0px;color:#242424;letter-spacing:-0.059px;left:676.00px;width:300px;text-align:center;"><span>квадратическая</span></div>
<div class="t" style="top:303.34px;font-size:12.0px;color:#242424;letter-spacing:0.032px;left:676.00px;width:300px;text-align:center;"><span>погрешность...</span></div>
<div class="t" style="top:270.94px;font-size:12.0px;color:#242424;letter-spacing:0.145px;left:744.30px;width:300px;text-align:center;"><span>Описа</span></div>
<div class="t" style="top:287.14px;font-size:12.0px;color:#242424;letter-spacing:0.242px;left:744.30px;width:300px;text-align:center;"><span>ние</span></div>
<div class="t" style="top:303.34px;font-size:12.0px;color:#242424;letter-spacing:0.065px;left:744.30px;width:300px;text-align:center;"><span>закр...</span></div>
<div class="t" style="top:596.14px;font-size:12.0px;color:#242424;font-weight:700;letter-spacing:-0.139px;left:39.80px;">Сведения о частях границы</div>
<div class="t" style="top:664.14px;font-size:12.0px;color:#2fa36b;letter-spacing:0.023px;left:79.80px;">Граница</div>
<div class="t" style="top:668.84px;font-size:12.0px;color:#242424;letter-spacing:0.121px;left:246.90px;">! От точки</div>
<div class="t" style="top:668.84px;font-size:12.0px;color:#242424;letter-spacing:0.186px;left:368.80px;">! До точки</div>
<div class="t" style="top:660.54px;font-size:12.0px;color:#242424;letter-spacing:-0.053px;left:423.70px;width:300px;text-align:center;"><span>Сущ. описание прохождения части</span></div>
<div class="t" style="top:677.14px;font-size:12.0px;color:#242424;letter-spacing:0.240px;left:423.70px;width:300px;text-align:center;"><span>границы</span></div>
<div class="t" style="top:660.54px;font-size:12.0px;color:#242424;letter-spacing:0.046px;left:651.40px;width:300px;text-align:center;"><span>Уточн. описание прохождения части</span></div>
<div class="t" style="top:677.14px;font-size:12.0px;color:#242424;letter-spacing:0.240px;left:651.40px;width:300px;text-align:center;"><span>границы</span></div>
<div class="t" style="top:74.71px;font-size:22.2px;color:#444;-webkit-text-stroke:0.3px #444;left:467.90px;">Ω</div>
<div class="t" style="top:28.39px;font-size:15.6px;color:#3c3c3c;font-weight:700;transform:scaleX(.8);transform-origin:0 0;left:975.10px;">?</div>
<div class="t" style="top:788.14px;font-size:12.0px;color:#fff;letter-spacing:0.013px;left:6.40px;">Автосохранение выполнено успешно.</div>
</body></html>
